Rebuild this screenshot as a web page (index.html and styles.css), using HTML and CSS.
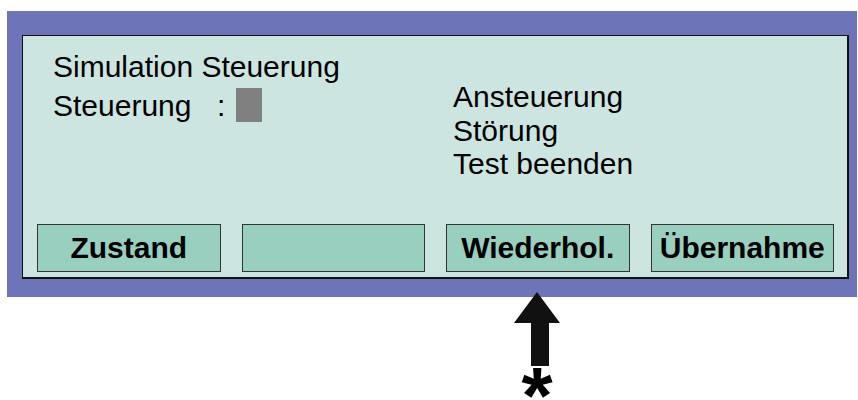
FILE: index.html
```html
<!DOCTYPE html>
<html lang="de">
<head>
  <meta charset="UTF-8" />
  <title>Simulation Steuerung</title>
  <link rel="stylesheet" href="styles.css">
</head>
<body>

<div class="frame">
  <div class="display">
    <div class="info">
      <div class="left">
        <div class="line">Simulation Steuerung</div>
        <div class="line">
          <span class="label">Steuerung</span><span class="colon">:</span><span class="value"></span>
        </div>
      </div>
      <div class="right">
        <div class="item">Ansteuerung</div>
        <div class="item">Störung</div>
        <div class="item">Test beenden</div>
      </div>
    </div>
    <div class="keys">
      <div class="key">Zustand</div>
      <div class="key"></div>
      <div class="key">Wiederhol.</div>
      <div class="key">Übernahme</div>
    </div>
  </div>
</div>

<div class="pointer">
  <svg width="46" height="74" viewBox="0 0 46 74">
    <polygon points="23,0 46,31 35,31 35,74 17,74 17,31 0,31" fill="#111"/>
  </svg>
  <div class="star">*</div>
</div>

</body>
</html>
```

FILE: styles.css
```css
body {
  margin: 0;
  background: #fff;
  font-family: "Liberation Sans", Arial, sans-serif;
  color: #000;
}
.frame {
  margin: 11px 0 0 7px;
  width: 850px;
  height: 286px;
  box-sizing: border-box;
  background: #6d75b8;
  padding: 24px 8px 18px 15px;
}
.display {
  height: 100%;
  box-sizing: border-box;
  background: #cce5e0;
  border: 1px solid #111;
  border-right-width: 2px;
  border-bottom-width: 2px;
  padding: 11px 13px 5px 14px;
  display: flex;
  flex-direction: column;
}
.info {
  display: flex;
  padding-left: 16px;
  font-size: 30px;
}
.left {
  width: 400px;
  line-height: 39px;
}
.label {
  display: inline-block;
  width: 164px;
}
.value {
  display: inline-block;
  width: 26px;
  height: 34px;
  margin-left: 11px;
  background: #808080;
  vertical-align: -6px;
}
.right {
  margin-top: 33px;
  line-height: 33.5px;
}
.keys {
  margin-top: auto;
  display: grid;
  grid-template-columns: repeat(4, 1fr);
  column-gap: 21px;
}
.key {
  height: 48px;
  box-sizing: border-box;
  background: #99cfbf;
  border: 1px solid #333;
  display: flex;
  align-items: center;
  justify-content: center;
  font-size: 30px;
  font-weight: bold;
}
.pointer {
  position: relative;
  margin: -5px 0 0 514px;
  width: 46px;
  display: flex;
  flex-direction: column;
  align-items: center;
}
.pointer svg {
  display: block;
}
.star {
  width: 46px;
  height: 34px;
  overflow: hidden;
  text-align: center;
  font-size: 80px;
  font-weight: bold;
  line-height: 59px;
}
```
